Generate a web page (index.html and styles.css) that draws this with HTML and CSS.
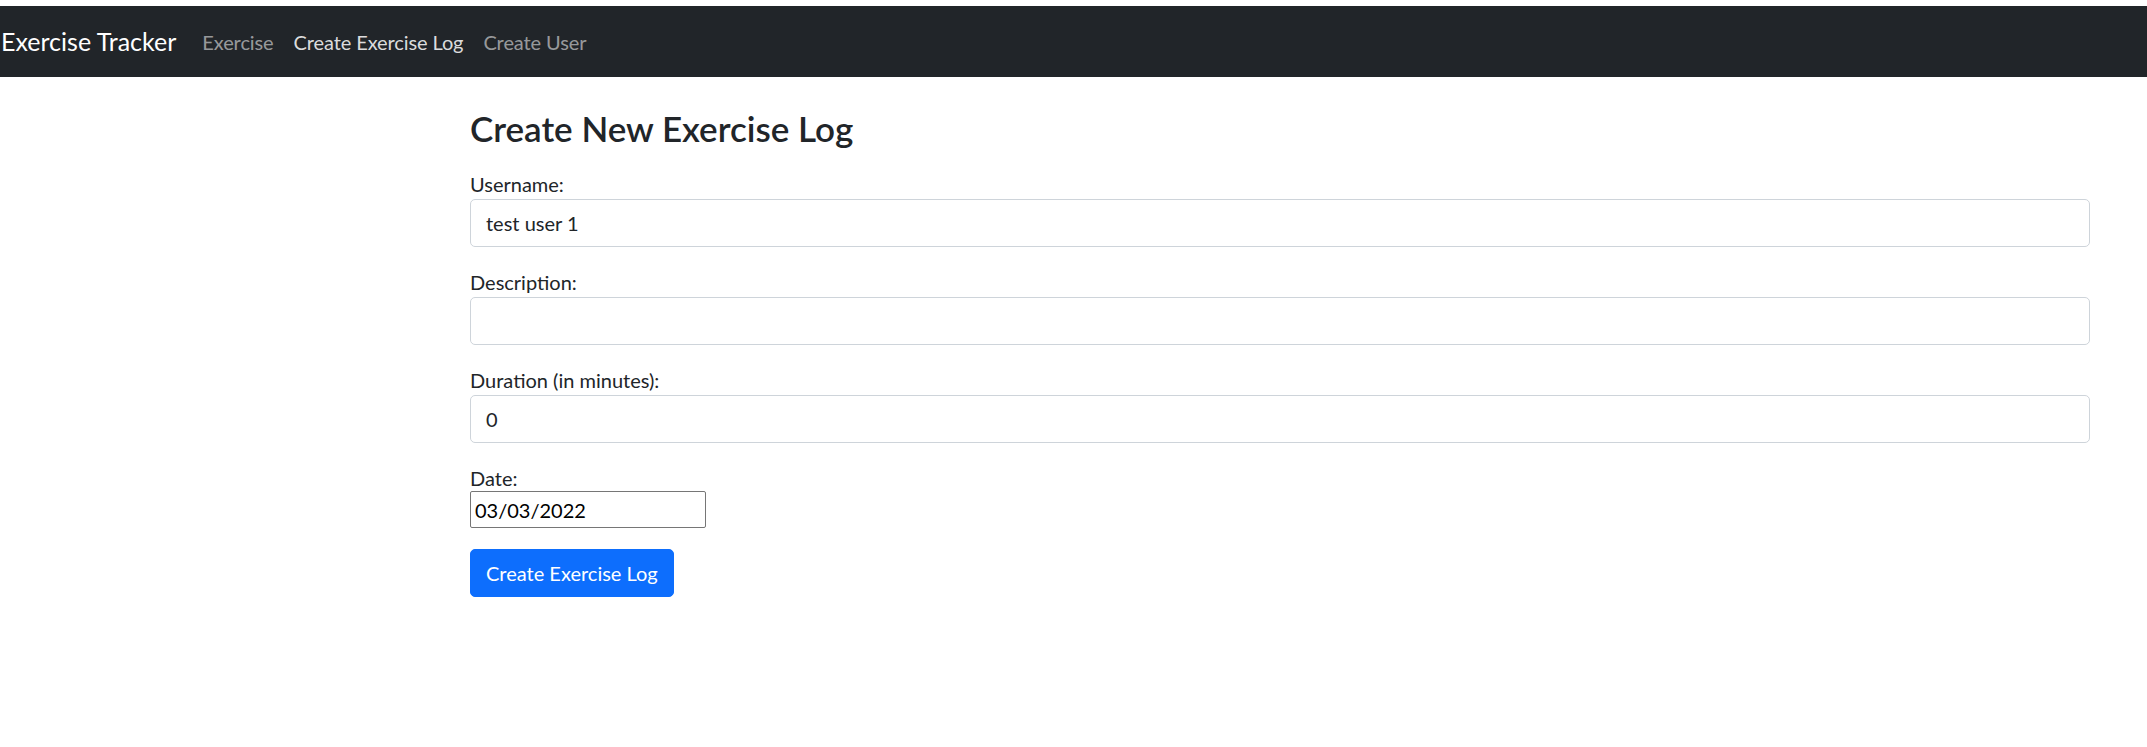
FILE: index.html
```html
<!DOCTYPE html>
<html lang="en">
<head>
<meta charset="utf-8">
<title>Exercise Tracker</title>
<link rel="stylesheet" href="styles.css">
</head>
<body>
<nav class="navbar">
  <a class="brand" href="#">Exercise Tracker</a>
  <ul class="nav-links">
    <li><a class="nav-link" href="#">Exercise</a></li>
    <li><a class="nav-link active" href="#">Create Exercise Log</a></li>
    <li><a class="nav-link" href="#">Create User</a></li>
  </ul>
</nav>
<main class="content">
  <h3 class="title">Create New Exercise Log</h3>
  <form class="form">
    <div class="form-group">
      <label class="label">Username:</label>
      <input class="form-control" type="text" value="test user 1">
    </div>
    <div class="form-group">
      <label class="label">Description:</label>
      <input class="form-control" type="text" value="">
    </div>
    <div class="form-group">
      <label class="label">Duration (in minutes):</label>
      <input class="form-control" type="text" value="0">
    </div>
    <div class="form-group">
      <label class="label">Date:</label>
      <input class="date-input" type="text" value="03/03/2022">
    </div>
    <div class="form-group">
      <button class="btn-primary" type="button">Create Exercise Log</button>
    </div>
  </form>
</main>
</body>
</html>
```
FILE: styles.css
```css
* { box-sizing: border-box; }

body {
  margin: 0;
  padding-top: 6px;
  background: #fff;
  color: #212529;
  font-family: "Lato", "Open Sans", sans-serif;
  font-size: 20px;
  line-height: 1.5;
}

.navbar {
  display: flex;
  align-items: center;
  height: 71px;
  background: #212529;
  padding: 0 0 0 1px;
}

.brand {
  color: #fff;
  text-decoration: none;
  font-size: 25px;
  margin-right: 16px;
  white-space: nowrap;
}

.nav-links {
  display: flex;
  list-style: none;
  margin: 0;
  padding: 0;
}

.nav-link {
  display: block;
  padding: 0 10px;
  color: rgba(255, 255, 255, 0.55);
  text-decoration: none;
  font-size: 20px;
  letter-spacing: -0.1px;
  white-space: nowrap;
}

.nav-link.active {
  color: rgba(255, 255, 255, 0.85);
}

.content {
  margin-left: 470px;
  width: 1620px;
  padding-top: 30px;
}

.title {
  margin: 0 0 20px;
  font-size: 35px;
  font-weight: 600;
  line-height: 42px;
}

.form-group {
  margin-bottom: 20px;
}

.label {
  display: block;
  font-size: 20px;
  line-height: 30px;
}

.form-control {
  display: block;
  width: 100%;
  height: 48px;
  padding: 0 15px;
  font-family: inherit;
  font-size: 20px;
  color: #212529;
  background: #fff;
  border: 1px solid #ced4da;
  border-radius: 5px;
  outline: none;
}

.date-input {
  display: block;
  width: 236px;
  height: 37px;
  margin-top: -2px;
  padding: 0 4px;
  font-family: inherit;
  font-size: 20px;
  color: #000;
  background: #fff;
  border: 1px solid #767676;
  border-radius: 2px;
  outline: none;
}

.btn-primary {
  display: inline-block;
  height: 48px;
  margin-top: 1px;
  padding: 0 15px;
  font-family: inherit;
  font-size: 20px;
  color: #fff;
  background: #0d6efd;
  border: 1px solid #0d6efd;
  border-radius: 5px;
  cursor: pointer;
}
```
